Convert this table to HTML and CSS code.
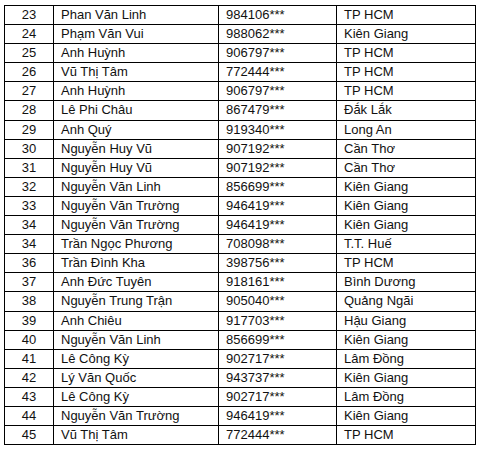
FILE: index.html
```html
<!DOCTYPE html>
<html>
<head>
<meta charset="utf-8">
<link rel="stylesheet" href="styles.css">
</head>
<body>
<table class="list">
<colgroup><col class="c-no"><col class="c-name"><col class="c-phone"><col class="c-prov"></colgroup>
<tbody>
<tr><td class="no">23</td><td>Phan Văn Linh</td><td>984106***</td><td>TP HCM</td></tr>
<tr><td class="no">24</td><td>Phạm Văn Vui</td><td>988062***</td><td>Kiên Giang</td></tr>
<tr><td class="no">25</td><td>Anh Huỳnh</td><td>906797***</td><td>TP HCM</td></tr>
<tr><td class="no">26</td><td>Vũ Thị Tâm</td><td>772444***</td><td>TP HCM</td></tr>
<tr><td class="no">27</td><td>Anh Huỳnh</td><td>906797***</td><td>TP HCM</td></tr>
<tr><td class="no">28</td><td>Lê Phi Châu</td><td>867479***</td><td>Đắk Lắk</td></tr>
<tr><td class="no">29</td><td>Anh Quý</td><td>919340***</td><td>Long An</td></tr>
<tr><td class="no">30</td><td>Nguyễn Huy Vũ</td><td>907192***</td><td>Cần Thơ</td></tr>
<tr><td class="no">31</td><td>Nguyễn Huy Vũ</td><td>907192***</td><td>Cần Thơ</td></tr>
<tr><td class="no">32</td><td>Nguyễn Văn Linh</td><td>856699***</td><td>Kiên Giang</td></tr>
<tr><td class="no">33</td><td>Nguyễn Văn Trường</td><td>946419***</td><td>Kiên Giang</td></tr>
<tr><td class="no">34</td><td>Nguyễn Văn Trường</td><td>946419***</td><td>Kiên Giang</td></tr>
<tr><td class="no">34</td><td>Trần Ngọc Phương</td><td>708098***</td><td>T.T. Huế</td></tr>
<tr><td class="no">36</td><td>Trần Đình Kha</td><td>398756***</td><td>TP HCM</td></tr>
<tr><td class="no">37</td><td>Anh Đức Tuyên</td><td>918161***</td><td>Bình Dương</td></tr>
<tr><td class="no">38</td><td>Nguyễn Trung Trận</td><td>905040***</td><td>Quảng Ngãi</td></tr>
<tr><td class="no">39</td><td>Anh Chiêu</td><td>917703***</td><td>Hậu Giang</td></tr>
<tr><td class="no">40</td><td>Nguyễn Văn Linh</td><td>856699***</td><td>Kiên Giang</td></tr>
<tr><td class="no">41</td><td>Lê Công Kỳ</td><td>902717***</td><td>Lâm Đồng</td></tr>
<tr><td class="no">42</td><td>Lý Văn Quốc</td><td>943737***</td><td>Kiên Giang</td></tr>
<tr><td class="no">43</td><td>Lê Công Kỳ</td><td>902717***</td><td>Lâm Đồng</td></tr>
<tr><td class="no">44</td><td>Nguyễn Văn Trường</td><td>946419***</td><td>Kiên Giang</td></tr>
<tr><td class="no">45</td><td>Vũ Thị Tâm</td><td>772444***</td><td>TP HCM</td></tr>
</tbody>
</table>
</body>
</html>
```
FILE: styles.css
```css
html, body {
  margin: 0;
  background: #fff;
}
body {
  padding: 5px 4px;
  font-family: "Liberation Sans", Arial, sans-serif;
  font-size: 13px;
  color: #111;
}
.list {
  border-collapse: collapse;
  table-layout: fixed;
  width: 471px;
}
.c-no { width: 49px; }
.c-name { width: 165px; }
.c-phone { width: 118px; }
.c-prov { width: 139px; }
.list td {
  border: 1px solid #000;
  padding: 0 0 0 7px;
  line-height: 18.1px;
  height: 18.1px;
  white-space: nowrap;
  overflow: hidden;
}
.list td.no {
  text-align: center;
  padding: 0;
}
```
